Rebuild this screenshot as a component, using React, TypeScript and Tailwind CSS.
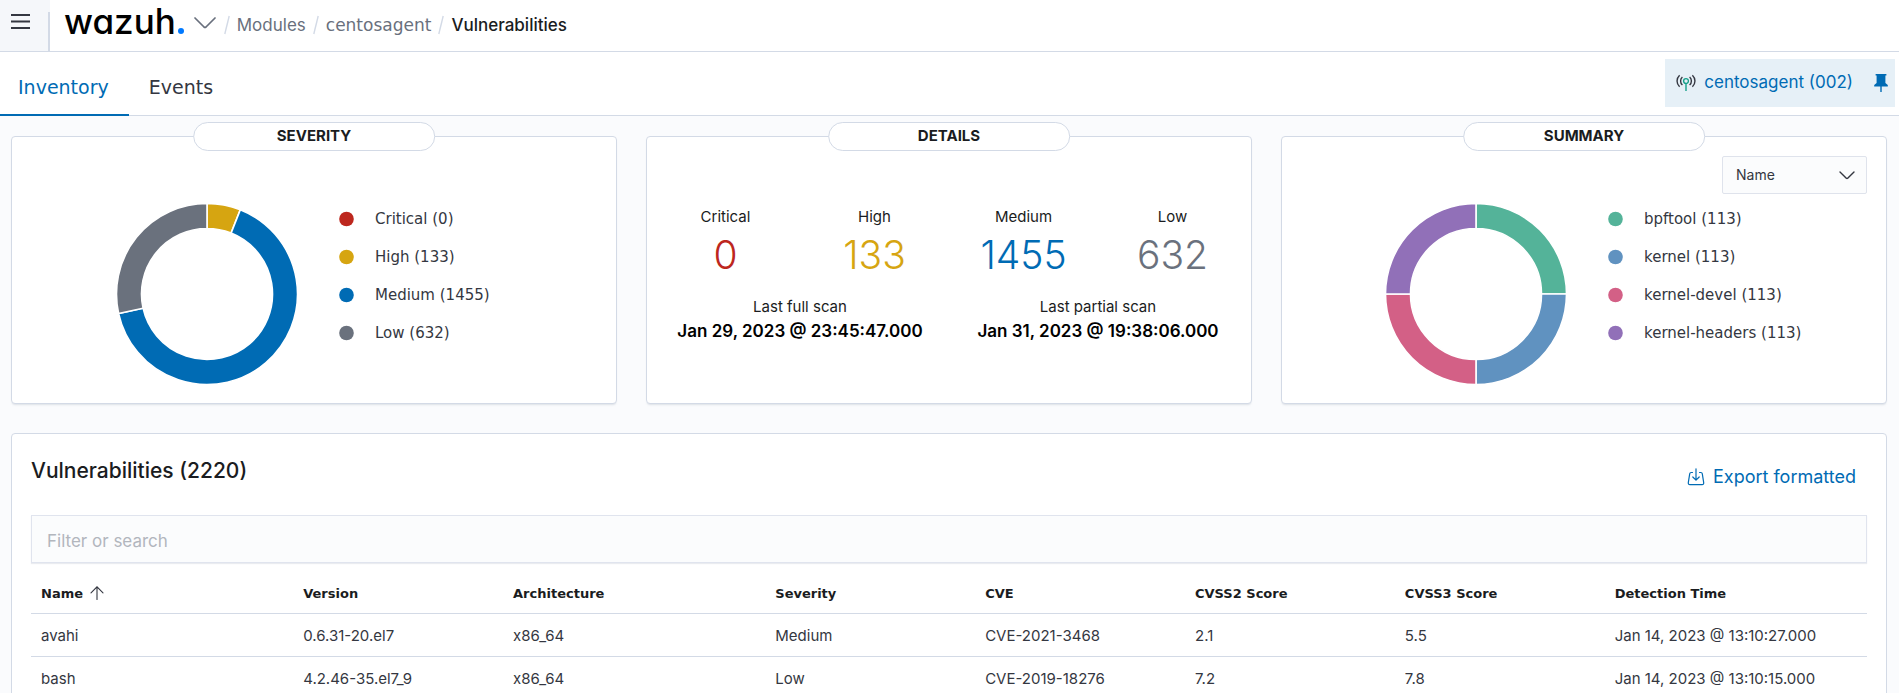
import React, { useState } from 'react';

type Slice = { label: string; value: number; color: string };

const SEVERITY: Slice[] = [
  { label: 'Critical', value: 0, color: '#bd271e' },
  { label: 'High', value: 133, color: '#d6a511' },
  { label: 'Medium', value: 1455, color: '#006bb4' },
  { label: 'Low', value: 632, color: '#6a717d' },
];

const SUMMARY: Slice[] = [
  { label: 'bpftool', value: 113, color: '#54b399' },
  { label: 'kernel', value: 113, color: '#6092c0' },
  { label: 'kernel-devel', value: 113, color: '#d36086' },
  { label: 'kernel-headers', value: 113, color: '#9170b8' },
];

const COLUMNS = [
  { title: 'Name', width: 'w-[14.28%]' },
  { title: 'Version', width: 'w-[11.43%]' },
  { title: 'Architecture', width: 'w-[14.28%]' },
  { title: 'Severity', width: 'w-[11.43%]' },
  { title: 'CVE', width: 'w-[11.43%]' },
  { title: 'CVSS2 Score', width: 'w-[11.43%]' },
  { title: 'CVSS3 Score', width: 'w-[11.43%]' },
  { title: 'Detection Time', width: 'w-[14.28%]' },
];

const ROWS = [
  ['avahi', '0.6.31-20.el7', 'x86_64', 'Medium', 'CVE-2021-3468', '2.1', '5.5', 'Jan 14, 2023 @ 13:10:27.000'],
  ['bash', '4.2.46-35.el7_9', 'x86_64', 'Low', 'CVE-2019-18276', '7.2', '7.8', 'Jan 14, 2023 @ 13:10:15.000'],
];

// Point on a circle, angle measured clockwise from 12 o'clock
function point(radius: number, fraction: number) {
  const a = fraction * Math.PI * 2;
  return `${90 + radius * Math.sin(a)} ${90 - radius * Math.cos(a)}`;
}

function Donut({ data, name }: { data: Slice[]; name: string }) {
  const total = data.reduce((sum, d) => sum + d.value, 0);
  let start = 0;
  return (
    <svg width="180" height="180" viewBox="0 0 180 180" role="img" aria-label={name} className="shrink-0">
      {data.filter(d => d.value > 0).map(d => {
        const from = start;
        const to = start + d.value / total;
        start = to;
        const large = to - from > 0.5 ? 1 : 0;
        return (
          <path
            key={d.label}
            fill={d.color}
            stroke="#fff"
            strokeWidth="1.6"
            d={`M${point(90.5, from)}A90.5 90.5 0 ${large} 1 ${point(90.5, to)}L${point(65.5, to)}A65.5 65.5 0 ${large} 0 ${point(65.5, from)}Z`}
          />
        );
      })}
    </svg>
  );
}

function Legend({ data }: { data: Slice[] }) {
  return (
    <ul className="-mt-1 flex flex-col font-['DejaVu_Sans'] text-[15px] text-[#343741]">
      {data.map(d => (
        <li key={d.label} className="flex h-[38px] items-center gap-5">
          <svg width="16" height="16" viewBox="0 0 16 16" aria-hidden="true">
            <circle cx="7.5" cy="8" r="7.3" fill={d.color} />
          </svg>
          {d.label} ({d.value})
        </li>
      ))}
    </ul>
  );
}

function Card({ title, children }: { title: string; children: React.ReactNode }) {
  return (
    <section className="relative h-[268px] rounded border border-[#d3dae6] bg-white shadow-[0_2px_2px_-1px_rgba(152,162,179,0.3)]">
      <h2 className="absolute -top-[15px] left-1/2 flex h-[29px] w-2/5 -translate-x-1/2 items-center justify-center rounded-full border border-[#d3dae6] bg-white text-[15px] font-bold text-[#1a1c21]">
        {title}
      </h2>
      {children}
    </section>
  );
}

function Stat({ label, value, color }: { label: string; value: number; color: string }) {
  return (
    <div className="flex flex-1 flex-col items-center">
      <span className="text-[15px] leading-6">{label}</span>
      <span className={`text-[39px] leading-[52px] font-light ${color}`}>{value}</span>
    </div>
  );
}

function Scan({ label, date }: { label: string; date: string }) {
  return (
    <p className="flex-1 text-[15px] leading-6">
      {label}
      <strong className="block text-[17px] leading-6 font-semibold text-black">{date}</strong>
    </p>
  );
}

function Slash() {
  return (
    <svg width="6" height="20" viewBox="0 0 6 20" fill="none" stroke="#d3dae6" strokeWidth="1.4" aria-hidden="true">
      <path d="M5.2 1L.8 19" />
    </svg>
  );
}

function AgentIcon() {
  return (
    <svg width="20" height="18" viewBox="0 0 20 18" fill="none" strokeWidth="1.4" aria-hidden="true">
      <path stroke="#343741" d="M3.6 1.2C.2 4.4.2 9.6 3.6 12.8M6.4 3C4 5 4 9 6.4 11M16.4 1.2c3.4 3.2 3.4 8.4 0 11.6M13.6 3C16 5 16 9 13.6 11" />
      <path stroke="#17a08a" d="M10 9.4V17M10 4.6a2.4 2.4 0 1 1 0 4.8a2.4 2.4 0 1 1 0-4.8Z" />
    </svg>
  );
}

function PinIcon() {
  return (
    <svg width="14" height="18" viewBox="0 0 14 18" fill="#006bb4" aria-hidden="true">
      <path d="M1.6 0h10.8v1.6h-1V9l2.4 2v1.4H7.7V18H6.3v-5.6H.2V11l2.4-2V1.6h-1z" />
    </svg>
  );
}

function ExportIcon() {
  return (
    <svg width="18" height="18" viewBox="0 0 18 18" fill="none" stroke="#006bb4" strokeWidth="1.2" strokeLinecap="round" strokeLinejoin="round" aria-hidden="true">
      <path d="M5.5 4.5H4.2c-.8 0-1.4.5-1.5 1.3L1.3 14.6c-.2 1.2.5 2 1.6 2h12.2c1.1 0 1.8-.8 1.6-2l-1.4-8.8c-.1-.8-.7-1.3-1.5-1.3h-1.3M9 .8v11.4M5.8 9L9 12.2 12.2 9" />
    </svg>
  );
}

export default function App() {
  const [tab, setTab] = useState('Inventory');
  const [groupBy, setGroupBy] = useState('Name');
  const [query, setQuery] = useState('');

  return (
    <div className="h-screen overflow-hidden bg-[#fafbfd] font-['Inter',sans-serif] text-[#343741]">
      {/* Header */}
      <header className="flex h-[52px] items-stretch border-b border-[#d3dae6] bg-white">
        <div className="flex w-[50px] items-end justify-between bg-[#f5f7fa]">
          <button aria-label="Menu" className="flex h-full items-start pt-[13px] pl-[10px]">
            <svg width="21" height="18" viewBox="0 0 21 18" stroke="#343741" strokeWidth="2.2" aria-hidden="true">
              <path d="M1 2H20M1 8.5H20M1 15H20" />
            </svg>
          </button>
          <span className="h-[39px] w-[2px] bg-[#d3dae6]" />
        </div>
        <div className="flex items-start pt-[5px] pl-[14px]">
          <a href="#" className="flex items-baseline text-black">
            <span className="text-[35px] leading-8 font-medium [font-feature-settings:'cv11']">wazuh</span>
            <span className="ml-[2px] size-[6px] rounded-full bg-[#0079ff]" />
          </a>
          <button aria-label="Switch module" className="mt-3 ml-[10px]">
            <svg width="22" height="12" viewBox="0 0 22 12" fill="none" stroke="#69707d" strokeWidth="1.7" strokeLinecap="round" strokeLinejoin="round" aria-hidden="true">
              <path d="M1 1l9 9q1 .9 2 0l9-9" />
            </svg>
          </button>
        </div>
        <nav className="flex items-center gap-[7px] self-start pt-[13px] pl-2 text-[17px] leading-6 text-[#69707d]">
          <Slash />
          <a href="#">Modules</a>
          <Slash />
          <a href="#" className="font-['DejaVu_Sans']">centosagent</a>
          <Slash />
          <span className="text-[17px] font-medium text-[#1a1c21]">Vulnerabilities</span>
        </nav>
      </header>

      {/* Tabs */}
      <div className="flex h-16 justify-between border-b border-[#d3dae6] bg-white pr-1">
        <div role="tablist" className="-mb-px flex gap-[2px] font-['DejaVu_Sans'] text-[19px]">
          {['Inventory', 'Events'].map(t => (
            <button
              key={t}
              role="tab"
              aria-selected={tab === t}
              onClick={() => setTab(t)}
              className={`border-b-2 pt-2 pr-5 pl-[18px] ${tab === t ? 'border-[#006bb4] text-[#006bb4]' : 'border-transparent'}`}
            >
              {t}
            </button>
          ))}
        </div>
        <button className="mt-[7px] flex h-12 items-center bg-[#e6f0f7] pr-[7px] pl-[11px] text-[17px] text-[#006bb4]">
          <AgentIcon />
          <span className="mr-[21px] ml-2">centosagent (002)</span>
          <PinIcon />
        </button>
      </div>

      <main className="pt-5 pr-3 pb-4 pl-[11px]">
        <div className="grid grid-cols-3 gap-[29px]">
          <Card title="SEVERITY">
            <div className="flex gap-[42px] pt-[67px] pl-[105px]">
              <Donut data={SEVERITY} name="Severity" />
              <Legend data={SEVERITY} />
            </div>
          </Card>

          <Card title="DETAILS">
            <div className="px-1 pt-[68px] text-[#1a1c21]">
              <div className="flex">
                <Stat label="Critical" value={0} color="text-[#bd271e]" />
                <Stat label="High" value={133} color="text-[#d6a511]" />
                <Stat label="Medium" value={1455} color="text-[#006bb4]" />
                <Stat label="Low" value={632} color="text-[#6a717d]" />
              </div>
              <div className="mt-[14px] flex text-center">
                <Scan label="Last full scan" date="Jan 29, 2023 @ 23:45:47.000" />
                <Scan label="Last partial scan" date="Jan 31, 2023 @ 19:38:06.000" />
              </div>
            </div>
          </Card>

          <Card title="SUMMARY">
            <div className="flex h-[67px] justify-end pt-[19px] pr-[19px]">
              <div className="relative h-[38px]">
                <select
                  aria-label="Group by"
                  value={groupBy}
                  onChange={e => setGroupBy(e.target.value)}
                  className="h-full w-[145px] appearance-none rounded-xs border border-[#dfe3ec] bg-[#fbfcfd] px-[13px] text-sm"
                >
                  <option>Name</option>
                  <option>CVE</option>
                </select>
                <svg width="16" height="9" viewBox="0 0 16 9" fill="none" stroke="#343741" strokeWidth="1.4" strokeLinecap="round" strokeLinejoin="round" aria-hidden="true" className="pointer-events-none absolute top-[15px] right-3">
                  <path d="M1 1l6.3 6.2q.7.6 1.4 0L15 1" />
                </svg>
              </div>
            </div>
            <div className="flex gap-[42px] pl-[104px]">
              <Donut data={SUMMARY} name="Summary" />
              <Legend data={SUMMARY} />
            </div>
          </Card>
        </div>

        <section className="mt-[29px] rounded border border-[#d3dae6] bg-white px-[19px] pt-[19px] pb-6">
          <div className="flex items-start justify-between">
            <h1 className="text-[21px] leading-9 font-medium text-[#1a1c21]">Vulnerabilities (2220)</h1>
            <button className="mr-[11px] flex h-12 items-center gap-2 text-lg text-[#006bb4]">
              <ExportIcon />
              Export formatted
            </button>
          </div>
          <input
            aria-label="Filter or search"
            placeholder="Filter or search"
            value={query}
            onChange={e => setQuery(e.target.value)}
            className="mt-[14px] h-12 w-full border border-[#e0e4ee] bg-[#fbfcfd] px-[15px] pt-1 text-[17px] shadow-[0_1px_1px_rgba(152,162,179,0.2)] placeholder:text-[#b2b6bd]"
          />
          <table className="mt-[7px] w-full table-fixed text-left">
            <thead>
              <tr className="h-[43px] border-b border-[#d3dae6] font-['DejaVu_Sans'] text-[13px] text-[#1a1c21]">
                {COLUMNS.map((c, i) => (
                  <th key={c.title} className={`${c.width} px-[10px] pt-1 font-bold`}>
                    {i === 0 ? (
                      <button className="flex items-center gap-[7px]">
                        {c.title}
                        <svg width="14" height="14" viewBox="0 0 14 14" fill="none" stroke="#343741" strokeWidth="1.1" strokeLinecap="round" aria-hidden="true">
                          <path d="M7 13.4V1M1 6.8L7 .8l6 6" />
                        </svg>
                      </button>
                    ) : (
                      c.title
                    )}
                  </th>
                ))}
              </tr>
            </thead>
            <tbody>
              {ROWS.map(row => (
                <tr key={row[0]} className="h-[43px] border-b border-[#d3dae6]">
                  {row.map((cell, i) => (
                    <td key={i} className="px-[10px] pt-[3px] text-[15px]">{cell}</td>
                  ))}
                </tr>
              ))}
            </tbody>
          </table>
        </section>
      </main>
    </div>
  );
}
